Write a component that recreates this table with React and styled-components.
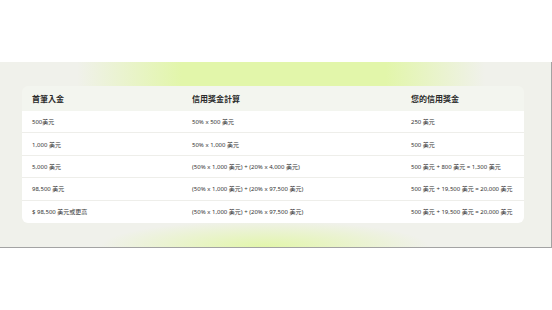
import React from 'react';
import styled, { createGlobalStyle } from 'styled-components';

const GlobalStyle = createGlobalStyle`
    html, body {
        margin: 0;
        padding: 0;
        background: #ffffff;
    }
    body {
        font-family: "Noto Sans", "Noto Sans CJK TC", sans-serif;
    }
`;

const Page = styled.div`
    width: 552px;
    height: 310px;
    padding-top: 62px;
    box-sizing: border-box;
`;

const Band = styled.section`
    width: 552px;
    box-sizing: border-box;
    padding: 24px 27px 24px 22px;
    border-right: 1px solid #a3a3a3;
    border-bottom: 1px solid #a3a3a3;
    background:
        linear-gradient(
                90deg,
                rgba(226, 246, 170, 0) 14%,
                rgba(226, 246, 170, 1) 33%,
                rgba(226, 246, 170, 1) 70%,
                rgba(226, 246, 170, 0) 88%
            )
            top / 100% 24px no-repeat,
        radial-gradient(
                ellipse 30% 110% at 48% 100%,
                rgba(226, 246, 170, 1) 0%,
                rgba(226, 246, 170, 0) 100%
            )
            bottom / 100% 24px no-repeat,
        #f0f1eb;
`;

const Table = styled.table`
    width: 502px;
    border-collapse: separate;
    border-spacing: 0;
    table-layout: fixed;
    color: #333333;
`;

const HeadCell = styled.th`
    height: 25px;
    padding: 0 10px;
    text-align: left;
    font-size: 8px;
    font-weight: 600;
    color: #2a2a2a;
    background: #f3f5ef;
    white-space: nowrap;
    &:first-child {
        border-top-left-radius: 6px;
    }
    &:last-child {
        border-top-right-radius: 6px;
    }
`;

const Row = styled.tr`
    &:last-child td {
        border-bottom: none;
    }
    &:last-child td:first-child {
        border-bottom-left-radius: 6px;
    }
    &:last-child td:last-child {
        border-bottom-right-radius: 6px;
    }
`;

const Cell = styled.td`
    height: 22.4px;
    padding: 0 10px;
    font-size: 6px;
    background: #ffffff;
    border-bottom: 1px solid #eeeeea;
    white-space: nowrap;
    box-sizing: border-box;
`;

const columns = [
    { title: '首筆入金', width: 160 },
    { title: '信用獎金計算', width: 219 },
    { title: '您的信用獎金', width: 123 },
];

const rows = [
    ['500美元', '50% x 500 美元', '250 美元'],
    ['1,000 美元', '50% x 1,000 美元', '500 美元'],
    [
        '5,000 美元',
        '(50% x 1,000 美元) + (20% x 4,000 美元)',
        '500 美元 + 800 美元 = 1,300 美元',
    ],
    [
        '98,500 美元',
        '(50% x 1,000 美元) + (20% x 97,500 美元)',
        '500 美元 + 19,500 美元 = 20,000 美元',
    ],
    [
        '$ 98,500 美元或更高',
        '(50% x 1,000 美元) + (20% x 97,500 美元)',
        '500 美元 + 19,500 美元 = 20,000 美元',
    ],
];

const App = () => (
    <Page>
        <GlobalStyle />
        <Band>
            <Table>
                <colgroup>
                    {columns.map((col) => (
                        <col key={col.title} style={{ width: col.width }} />
                    ))}
                </colgroup>
                <thead>
                    <tr>
                        {columns.map((col) => (
                            <HeadCell key={col.title}>{col.title}</HeadCell>
                        ))}
                    </tr>
                </thead>
                <tbody>
                    {rows.map((row, i) => (
                        <Row key={i}>
                            {row.map((value, j) => (
                                <Cell key={j}>{value}</Cell>
                            ))}
                        </Row>
                    ))}
                </tbody>
            </Table>
        </Band>
    </Page>
);

export default App;
